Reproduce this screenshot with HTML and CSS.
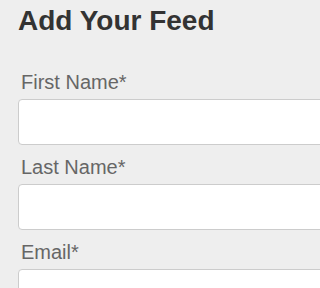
FILE: index.html
```html
<!DOCTYPE html>
<html>
<head>
<meta charset="utf-8">
<link rel="stylesheet" href="styles.css">
</head>
<body>
<div class="page">
  <h1 class="title">Add Your Feed</h1>
  <form class="form">
    <div class="field">
      <label class="label">First Name*</label>
      <input class="input" type="text">
    </div>
    <div class="field">
      <label class="label">Last Name*</label>
      <input class="input" type="text">
    </div>
    <div class="field">
      <label class="label">Email*</label>
      <input class="input" type="text">
    </div>
  </form>
</div>
</body>
</html>
```
FILE: styles.css
```css
html, body {
  margin: 0;
  padding: 0;
  background: #eeeeee;
}
.page {
  box-sizing: border-box;
  width: 100%;
  height: 100vh;
  overflow: hidden;
  padding: 5px 0 0 18px;
  font-family: "Liberation Sans", Arial, sans-serif;
}
.title {
  margin: 0;
  font-size: 28px;
  font-weight: bold;
  color: #333333;
  line-height: 32px;
}
.form {
  margin-top: 34px;
  display: flex;
  flex-direction: column;
  gap: 11px;
  overflow: hidden;
}
.field {
  display: flex;
  flex-direction: column;
  gap: 5px;
}
.label {
  padding-left: 3px;
  font-size: 20px;
  line-height: 23px;
  color: #666666;
}
.input {
  box-sizing: border-box;
  width: calc(100% + 20px);
  flex: none;
  height: 46px;
  margin: 0;
  border: 1px solid #cccccc;
  border-radius: 4px;
  background: #ffffff;
  outline: none;
}
```
